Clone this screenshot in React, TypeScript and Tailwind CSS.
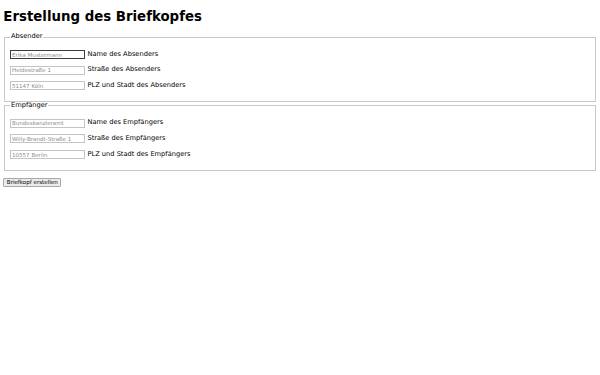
import React from "react";

interface Field {
  placeholder: string;
  label: string;
}

const SENDER: Field[] = [
  { placeholder: "Erika Mustermann", label: "Name des Absenders" },
  { placeholder: "Heidestraße 1", label: "Straße des Absenders" },
  { placeholder: "51147 Köln", label: "PLZ und Stadt des Absenders" },
];

const RECIPIENT: Field[] = [
  { placeholder: "Bundeskanzleramt", label: "Name des Empfängers" },
  { placeholder: "Willy-Brandt-Straße 1", label: "Straße des Empfängers" },
  { placeholder: "10557 Berlin", label: "PLZ und Stadt des Empfängers" },
];

function FieldGroup({ legend, fields, focusFirst }: { legend: string; fields: Field[]; focusFirst?: boolean }) {
  return (
    <fieldset className="mx-[0.83px] border border-[#c8c8c8] px-[5px] pt-[2.33px] pb-[4.17px]">
      <legend className="px-[0.83px] leading-[7.76px]">{legend}</legend>
      {fields.map((f, i) => (
        <p key={f.label} className="my-[6.67px] flex items-center gap-[2.8px] h-[8.96px]">
          <input
            type="text"
            placeholder={f.placeholder}
            className={`w-[74.5px] h-[8.96px] bg-white px-[0.83px] text-[5.56px] leading-[6.47px] outline-none placeholder:text-[#8d8d8d] ${
              focusFirst && i === 0 ? "border-[1.3px] border-[#3c3c3c]" : "border border-[#c4c4c4]"
            }`}
          />
          <span className="leading-[7.76px]">{f.label}</span>
        </p>
      ))}
    </fieldset>
  );
}

export default function App() {
  return (
    <div className="min-h-screen bg-white p-[3.33px] text-[6.67px] text-black font-['DejaVu_Sans',sans-serif]">
      <h1 className="mt-[5.6px] mb-[8.93px] text-[13.33px] font-bold leading-[15.52px]">
        Erstellung des Briefkopfes
      </h1>
      <form>
        <FieldGroup legend="Absender" fields={SENDER} focusFirst />
        <FieldGroup legend="Empfänger" fields={RECIPIENT} />
        <p className="my-[6.67px]">
          <button
            type="button"
            className="h-[8.96px] rounded-[1px] border border-[#a8a8a8] bg-[#ebebeb] px-[2.5px] text-[5.56px] leading-[6.47px]"
          >
            Briefkopf erstellen
          </button>
        </p>
      </form>
    </div>
  );
}
